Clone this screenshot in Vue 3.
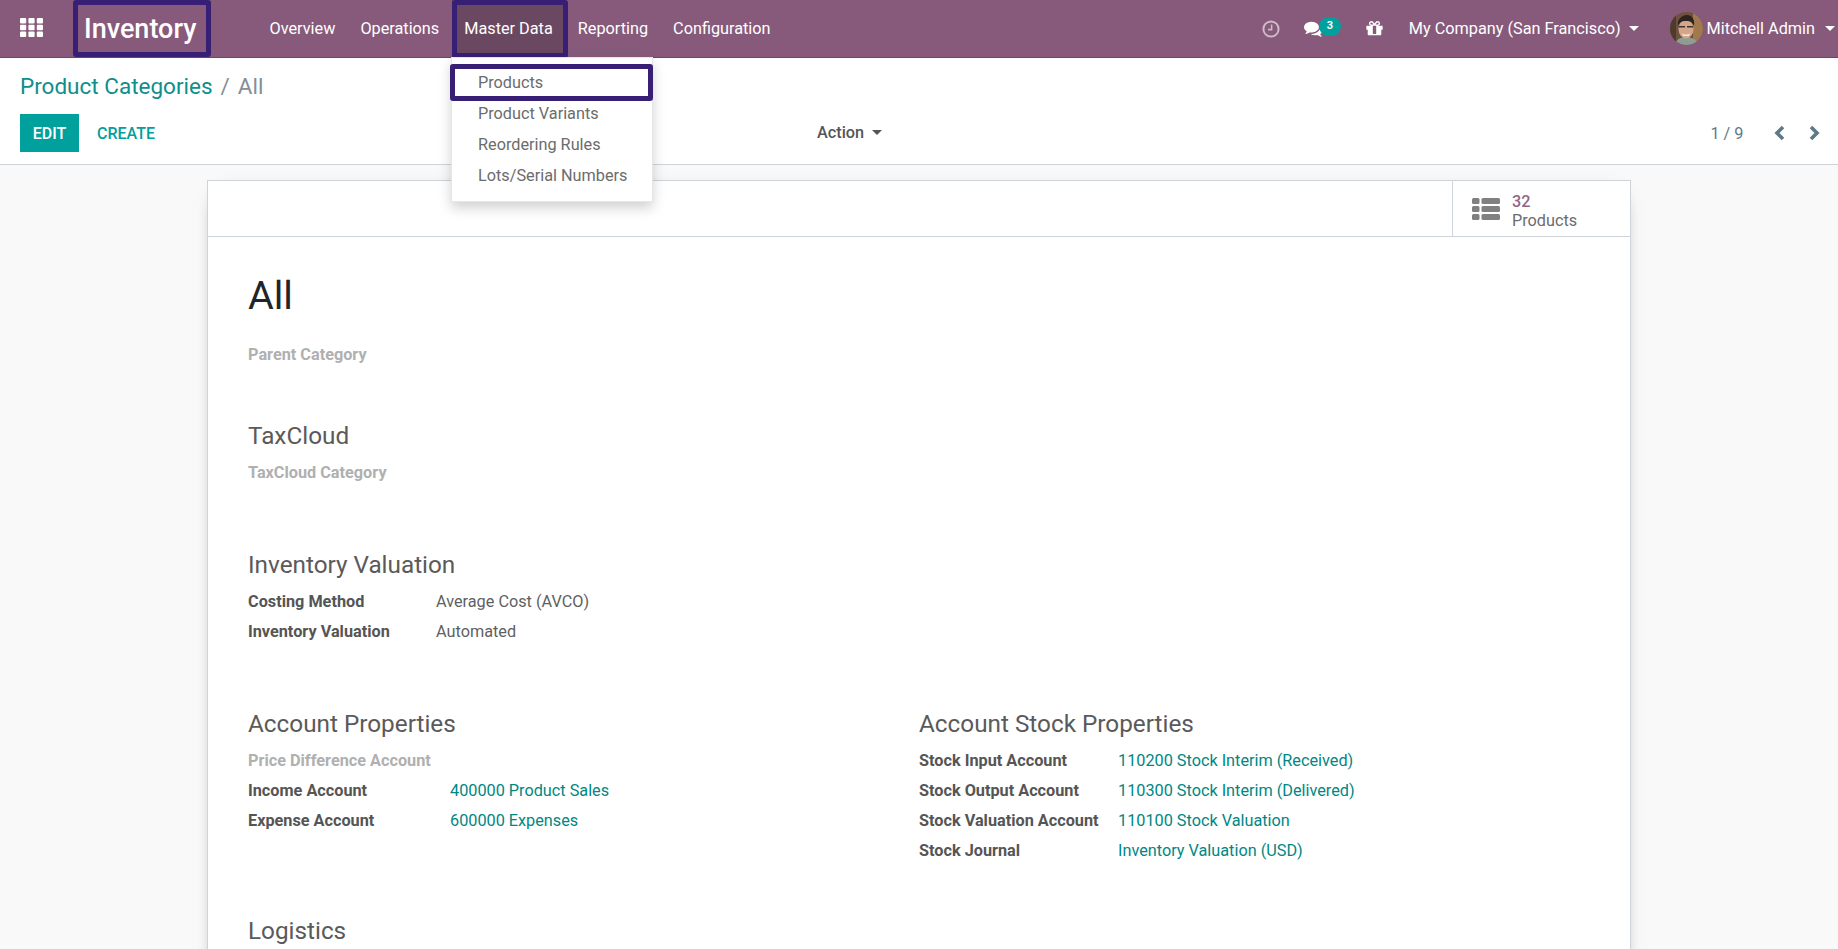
<template>
  <div class="page">
    <header class="navbar">
      <button class="apps" aria-label="Apps">
        <svg width="23" height="19" viewBox="0 0 23 19">
          <g fill="#fff">
            <template v-for="row in [0, 6.7, 13.4]" :key="row">
              <rect v-for="col in [0, 8.4, 16.8]" :key="col" :x="col" :y="row" width="6.2" height="5.6" rx="1" />
            </template>
          </g>
        </svg>
      </button>
      <a class="brand ringed">Inventory</a>
      <nav class="menu">
        <a v-for="item in menu" :key="item" class="menu-item" :class="{ active: item === 'Master Data' }">{{ item }}</a>
      </nav>

      <div class="systray">
        <svg class="clock" width="18" height="18" viewBox="0 0 18 18" fill="none" stroke="#cdbcc8" stroke-width="2">
          <circle cx="9" cy="9" r="7.6" />
          <path d="M9.6 4.6v5H6" stroke-width="1.6" />
        </svg>
        <span class="messages">
          <svg width="19" height="19" viewBox="0 0 1792 1792" fill="#fff">
            <path d="M1408 768q0 139-94 257t-256.500 186.500-353.500 68.500q-86 0-176-16-124 88-278 128-36 9-86 16h-3q-11 0-20.500-8t-11.500-21q-1-3-1-6.500t.5-6.500 2-6l2.500-5 3.500-5.500 4-5 4.500-5 4-4.500q5-6 23-25t26-29.500 22.500-29 25-38.500 20.500-44q-124-72-195-177t-71-224q0-139 94-257t256.500-186.500 353.500-68.500 353.500 68.500 256.500 186.500 94 257zm384 256q0 120-71 224.500t-195 176.500q10 24 20.500 44t25 38.500 22.500 29 26 29.500 23 25q1 1 4 4.500t4.500 5 4 5 3.500 5.500l2.500 5 2 6 .5 6.500-1 6.500q-3 14-13 22t-22 7q-50-7-86-16-154-40-278-128-90 16-176 16-271 0-472-132 58 4 88 4 161 0 309-45t264-129q125-92 192-212t67-254q0-77-23-152 129 71 204 178t75 230z" />
          </svg>
          <span class="badge">3</span>
        </span>
        <svg class="gift" width="19" height="19" viewBox="0 0 1792 1792" fill="#fff">
          <path d="M1056 1356v-716h-320v716q0 25 18 38.500t46 13.500h192q28 0 46-13.500t18-38.500zm-456-844h195l-126-161q-26-31-69-31-40 0-68 28t-28 68 28 68 68 28zm688-96q0-40-28-68t-68-28q-43 0-69 31l-125 161h194q40 0 68-28t28-68zm376 256v320q0 14-9 23t-23 9h-96v416q0 40-28 68t-68 28h-1088q-40 0-68-28t-28-68v-416h-96q-14 0-23-9t-9-23v-320q0-14 9-23t23-9h440q-93 0-158.500-65.500t-65.500-158.500 65.500-158.500 158.500-65.500q107 0 168 77l128 165 128-165q61-77 168-77 93 0 158.500 65.500t65.500 158.500-65.500 158.500-158.500 65.500h440q14 0 23 9t9 23z" />
        </svg>
        <span class="company">My Company (San Francisco)<i class="caret"></i></span>
        <span class="user">
          <svg class="avatar" width="33" height="33" viewBox="0 0 33 33">
            <defs>
              <clipPath id="avatar-clip"><circle cx="16.500" cy="16.500" r="16.500" /></clipPath>
            </defs>
            <g clip-path="url(#avatar-clip)">
              <rect width="33" height="33" fill="#6e5240" />
              <rect x="23" width="10" height="33" fill="#a07a4e" />
              <rect width="6" height="33" fill="#4f3a2c" />
              <path d="M5 33c1-6 6-8 11-8s11 2 12 8z" fill="#8f9c94" />
              <ellipse cx="16" cy="17" rx="7.500" ry="9.500" fill="#d3a68a" />
              <path d="M8 14c-1-7 4-11 9-11s8 4 7 11c-1-3-3-5-8-5s-7 2-8 5z" fill="#2e231d" />
              <path d="M9 14h6v1.500H9zM17 14h6v1.500h-6z" fill="#3d3230" />
              <path d="M12 21c2 2 6 2 8 0l-1 3h-6z" fill="#f2e6dc" />
            </g>
          </svg>
          Mitchell Admin<i class="caret"></i>
        </span>
      </div>
    </header>

    <ul class="dropdown">
      <li v-for="item in masterData" :key="item" :class="{ ringed: item === 'Products' }">{{ item }}</li>
    </ul>

    <section class="control-panel">
      <div class="breadcrumb">
        <a>Product Categories</a>
        <span class="sep">/</span>
        <span class="current">All</span>
      </div>
      <div class="actions">
        <div class="buttons">
          <button class="btn-edit">EDIT</button>
          <button class="btn-create">CREATE</button>
        </div>
        <span class="action-menu">Action<i class="caret dark"></i></span>
        <div class="pager">
          <span class="pager-value">1 / 9</span>
          <svg width="13" height="16" viewBox="0 0 13 16" fill="none" stroke="#5f7a87" stroke-width="3.600">
            <path d="M10 2 4 8l6 6" />
          </svg>
          <svg width="13" height="16" viewBox="0 0 13 16" fill="none" stroke="#5f7a87" stroke-width="3.600">
            <path d="m3 2 6 6-6 6" />
          </svg>
        </div>
      </div>
    </section>

    <main class="content">
      <article class="card">
        <div class="button-box">
          <div class="stat-button">
            <svg width="28" height="22" viewBox="0 0 28 22" fill="#808080">
              <template v-for="row in [0, 8, 16]" :key="row">
                <rect x="0" :y="row" width="7.500" height="6" rx="1.500" />
                <rect x="9.500" :y="row" width="18.500" height="6" rx="1.500" />
              </template>
            </svg>
            <div class="stat-text">
              <span class="stat-number">32</span>
              <span>Products</span>
            </div>
          </div>
        </div>

        <div class="sheet">
          <h1>All</h1>
          <div class="row muted first">Parent Category</div>

          <h2 class="taxcloud">TaxCloud</h2>
          <div class="row muted">TaxCloud Category</div>

          <h2 class="section">Inventory Valuation</h2>
          <dl class="fields valuation">
            <template v-for="f in valuation" :key="f.label">
              <dt>{{ f.label }}</dt>
              <dd>{{ f.value }}</dd>
            </template>
          </dl>

          <div class="columns">
            <div>
              <h2>Account Properties</h2>
              <div class="row muted">Price Difference Account</div>
              <dl class="fields accounts">
                <template v-for="f in accounts" :key="f.label">
                  <dt>{{ f.label }}</dt>
                  <dd class="link">{{ f.value }}</dd>
                </template>
              </dl>
            </div>
            <div>
              <h2>Account Stock Properties</h2>
              <dl class="fields stock">
                <template v-for="f in stock" :key="f.label">
                  <dt>{{ f.label }}</dt>
                  <dd class="link">{{ f.value }}</dd>
                </template>
              </dl>
            </div>
          </div>

          <h2 class="logistics">Logistics</h2>
        </div>
      </article>
    </main>
  </div>
</template>

<script setup>
const menu = ['Overview', 'Operations', 'Master Data', 'Reporting', 'Configuration']
const masterData = ['Products', 'Product Variants', 'Reordering Rules', 'Lots/Serial Numbers']

const valuation = [
  { label: 'Costing Method', value: 'Average Cost (AVCO)' },
  { label: 'Inventory Valuation', value: 'Automated' },
]
const accounts = [
  { label: 'Income Account', value: '400000 Product Sales' },
  { label: 'Expense Account', value: '600000 Expenses' },
]
const stock = [
  { label: 'Stock Input Account', value: '110200 Stock Interim (Received)' },
  { label: 'Stock Output Account', value: '110300 Stock Interim (Delivered)' },
  { label: 'Stock Valuation Account', value: '110100 Stock Valuation' },
  { label: 'Stock Journal', value: 'Inventory Valuation (USD)' },
]
</script>

<style>
html,
body {
  margin: 0;
  height: 100%;
  overflow: hidden;
}
</style>

<style scoped>
.page {
  position: relative;
  height: 949px;
  overflow: hidden;
  display: flex;
  flex-direction: column;
  font-family: Roboto, "Noto Sans", sans-serif;
  font-size: 16.25px;
  color: #4c4c4c;
  background: #fff;
}

/* top bar */
.navbar {
  flex: none;
  height: 58px;
  box-sizing: border-box;
  display: flex;
  align-items: center;
  background: #875a7b;
  border-bottom: 1px solid #6b4861;
  color: #fff;
}

.apps {
  width: 73px;
  margin-bottom: 2px;
  padding: 0 0 0 20px;
  border: 0;
  background: none;
  text-align: left;
  line-height: 0;
}

.brand {
  position: relative;
  height: 100%;
  width: 138px;
  box-sizing: border-box;
  padding-left: 11px;
  display: flex;
  align-items: center;
  font-size: 27px;
  font-weight: 500;
}

/* the purple annotation rings sit over the real items */
.ringed::after {
  content: "";
  position: absolute;
  inset: 0;
  border: 5px solid #371f76;
  border-radius: 3px;
}

.menu {
  height: 100%;
  margin-left: 46px;
  display: flex;
}

.menu-item {
  position: relative;
  display: flex;
  align-items: center;
  padding: 0 12.500px;
}

.menu-item.active {
  background: #6b4861;
}

.menu-item.active::after {
  content: "";
  position: absolute;
  inset: 0 -3px -1px 0;
  border: 5px solid #371f76;
  border-radius: 3px;
}

.systray {
  margin-left: auto;
  padding-right: 3px;
  display: flex;
  align-items: center;
}

.clock {
  margin-right: 24px;
}

.messages {
  position: relative;
  display: flex;
  width: 61px;
}

.badge {
  position: absolute;
  left: 15px;
  top: -2px;
  width: 22px;
  height: 19px;
  border-radius: 10px;
  background: #00a09d;
  color: #fff;
  font-size: 11px;
  font-weight: 700;
  line-height: 18px;
  text-align: center;
}

.company {
  margin-left: 25px;
}

.company .caret {
  margin-left: 8px;
}

.user {
  margin-left: 31px;
  display: flex;
  align-items: center;
}

.avatar {
  margin-right: 4px;
}

.caret {
  display: inline-block;
  margin-left: 10px;
  vertical-align: 3px;
  border-top: 5px solid #fff;
  border-left: 5px solid transparent;
  border-right: 5px solid transparent;
}

.caret.dark {
  margin-left: 8px;
  border-top-color: #555;
}

/* Master Data dropdown */
.dropdown {
  position: absolute;
  z-index: 5;
  left: 451px;
  top: 57px;
  width: 202px;
  height: 145px;
  box-sizing: border-box;
  margin: 0;
  padding: 8.500px 0 0;
  list-style: none;
  background: #fff;
  border: 1px solid #e4e6ea;
  box-shadow: 0 6px 12px rgba(0, 0, 0, 0.18);
  color: #6c6c6c;
}

.dropdown li {
  position: relative;
  height: 31.300px;
  padding-left: 26px;
  line-height: 31.300px;
}

.dropdown li.ringed::after {
  inset: -3px -1px -3px -2px;
}

/* breadcrumb and buttons */
.control-panel {
  flex: none;
  height: 107px;
  box-sizing: border-box;
  padding: 0 20px;
  border-bottom: 1px solid #ced4da;
}

.breadcrumb {
  height: 56px;
  display: flex;
  align-items: center;
  font-size: 22.500px;
  color: #0e8e8c;
}

.sep {
  margin: 0 8px;
  color: #868e96;
}

.current {
  color: #868e96;
}

.actions {
  height: 38px;
  display: flex;
  align-items: center;
}

.buttons {
  width: 797px;
  display: flex;
  align-items: center;
}

.btn-edit,
.btn-create {
  height: 38px;
  border: 0;
  font: 500 16px Roboto, sans-serif;
}

.btn-edit {
  width: 59px;
  padding: 0;
  background: #00a09d;
  color: #fff;
}

.btn-create {
  margin-left: 18px;
  padding: 0;
  background: none;
  color: #00a09d;
}

.action-menu {
  margin-bottom: 1px;
  color: #555;
  font-weight: 500;
}

.pager {
  margin-left: auto;
  margin-right: -2.500px;
  display: flex;
  align-items: center;
  gap: 22px;
  color: #5f7a87;
}

.pager-value {
  margin-right: 7px;
}

/* form sheet */
.content {
  flex: 1;
  min-height: 0;
  padding-top: 15px;
  background: #f9f9f9;
}

.card {
  width: 1424px;
  min-height: 800px;
  box-sizing: border-box;
  margin: 0 auto;
  background: #fff;
  border: 1px solid #ced4da;
  box-shadow: 0 5px 20px -15px #000;
}

.button-box {
  height: 56px;
  box-sizing: border-box;
  display: flex;
  justify-content: flex-end;
  border-bottom: 1px solid #ced4da;
}

.stat-button {
  width: 178px;
  box-sizing: border-box;
  padding-left: 19px;
  display: flex;
  align-items: center;
  gap: 12px;
  border-left: 1px solid #ced4da;
  color: #6c6c6c;
}

.stat-text {
  display: flex;
  flex-direction: column;
  margin-top: 4px;
  line-height: 19px;
}

.stat-number {
  color: #8f6685;
  font-weight: 500;
}

.sheet {
  padding: 33px 0 0 40px;
}

h1 {
  margin: 0;
  height: 52px;
  font-size: 39.500px;
  font-weight: 400;
  line-height: 52px;
  color: #212529;
}

h2 {
  margin: 0 0 4px;
  height: 34px;
  font-size: 24.300px;
  font-weight: 400;
  line-height: 32px;
  color: #5a5a5a;
}

.row {
  height: 30px;
  line-height: 30px;
}

.muted {
  font-weight: 700;
  color: #b0b0b0;
}

.first {
  margin-top: 18px;
}

.taxcloud {
  margin-top: 49.500px;
}

.section {
  margin-top: 61px;
}

.fields {
  margin: 0;
  display: grid;
  grid-auto-rows: 30px;
  line-height: 30px;
}

.fields dt {
  font-weight: 700;
  color: #555;
}

.fields dd {
  margin: 0;
  color: #5f5f5f;
}

.fields dd.link {
  color: #008784;
}

.valuation {
  grid-template-columns: 188px 1fr;
}

.accounts {
  grid-template-columns: 202px 1fr;
}

.stock {
  grid-template-columns: 199px 1fr;
}

.columns {
  margin-top: 61px;
  display: grid;
  grid-template-columns: 671px 1fr;
}

.logistics {
  margin-top: 49px;
}
</style>
